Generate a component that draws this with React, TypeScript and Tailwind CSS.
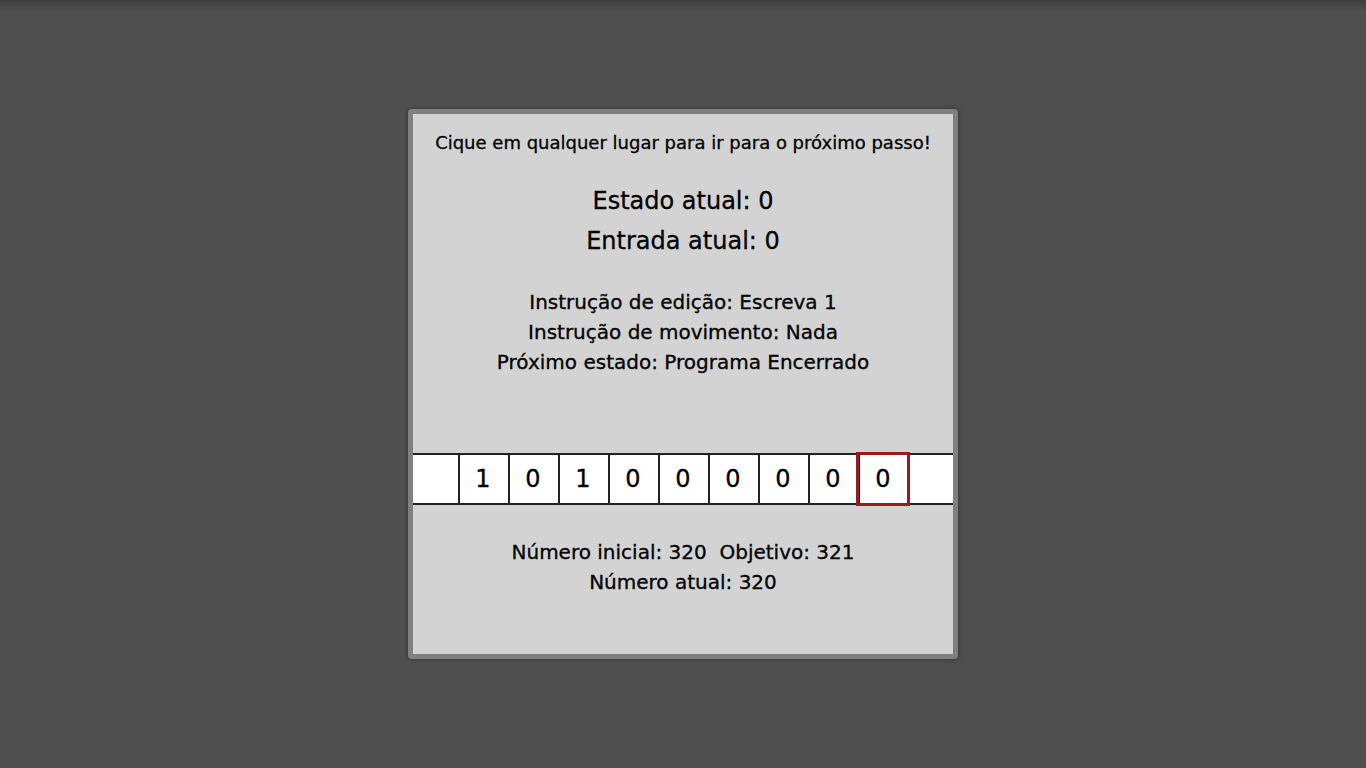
const tape = ['1', '0', '1', '0', '0', '0', '0', '0', '0']
const head = 8

export default function App() {
  return (
    <div
      className="h-screen w-full flex items-center justify-center bg-[#4f4f4f] bg-[linear-gradient(to_bottom,#3e3e3e,#4f4f4f_12px)] text-black"
      style={{ fontFamily: '"DejaVu Sans", sans-serif' }}
    >
      <div className="w-[550px] h-[550px] bg-[#d3d3d3] border-[5px] border-[#808080] rounded-[4px] shadow-[0_0_4px_rgba(0,0,0,0.4)] flex flex-col items-center text-center cursor-pointer select-none [-webkit-text-stroke:0.3px_black]">
        <p className="mt-[15px] text-[18px] leading-[28px]">Cique em qualquer lugar para ir para o próximo passo!</p>

        <div className="mt-[24px] text-[24px] leading-[40px]">
          <p>Estado atual: 0</p>
          <p>Entrada atual: 0</p>
        </div>

        <div className="mt-[26px] text-[20px] leading-[30px]">
          <p>Instrução de edição: Escreva 1</p>
          <p>Instrução de movimento: Nada</p>
          <p>Próximo estado: Programa Encerrado</p>
        </div>

        {/* fita */}
        <div className="mt-[76px] w-full h-[52px] bg-white border-y-2 border-[#222] flex">
          <div className="w-[45px] shrink-0" />
          {tape.map((v, i) => (
            <div
              key={i}
              className="relative shrink-0 w-[50px] h-full border-l-2 border-[#222] flex items-center justify-center pr-[2px] text-[24px]"
            >
              {v}
              {i === head && (
                <span className="absolute z-10 -top-[3px] -bottom-[3px] -left-[4px] -right-[2px] border-[3px] border-[#9a1b1f]" />
              )}
            </div>
          ))}
          <div className="flex-1 border-l-2 border-[#222]" />
        </div>

        <div className="mt-[32px] text-[20px] leading-[30px]">
          <p className="whitespace-pre">Número inicial: 320  Objetivo: 321</p>
          <p>Número atual: 320</p>
        </div>
      </div>
    </div>
  )
}
